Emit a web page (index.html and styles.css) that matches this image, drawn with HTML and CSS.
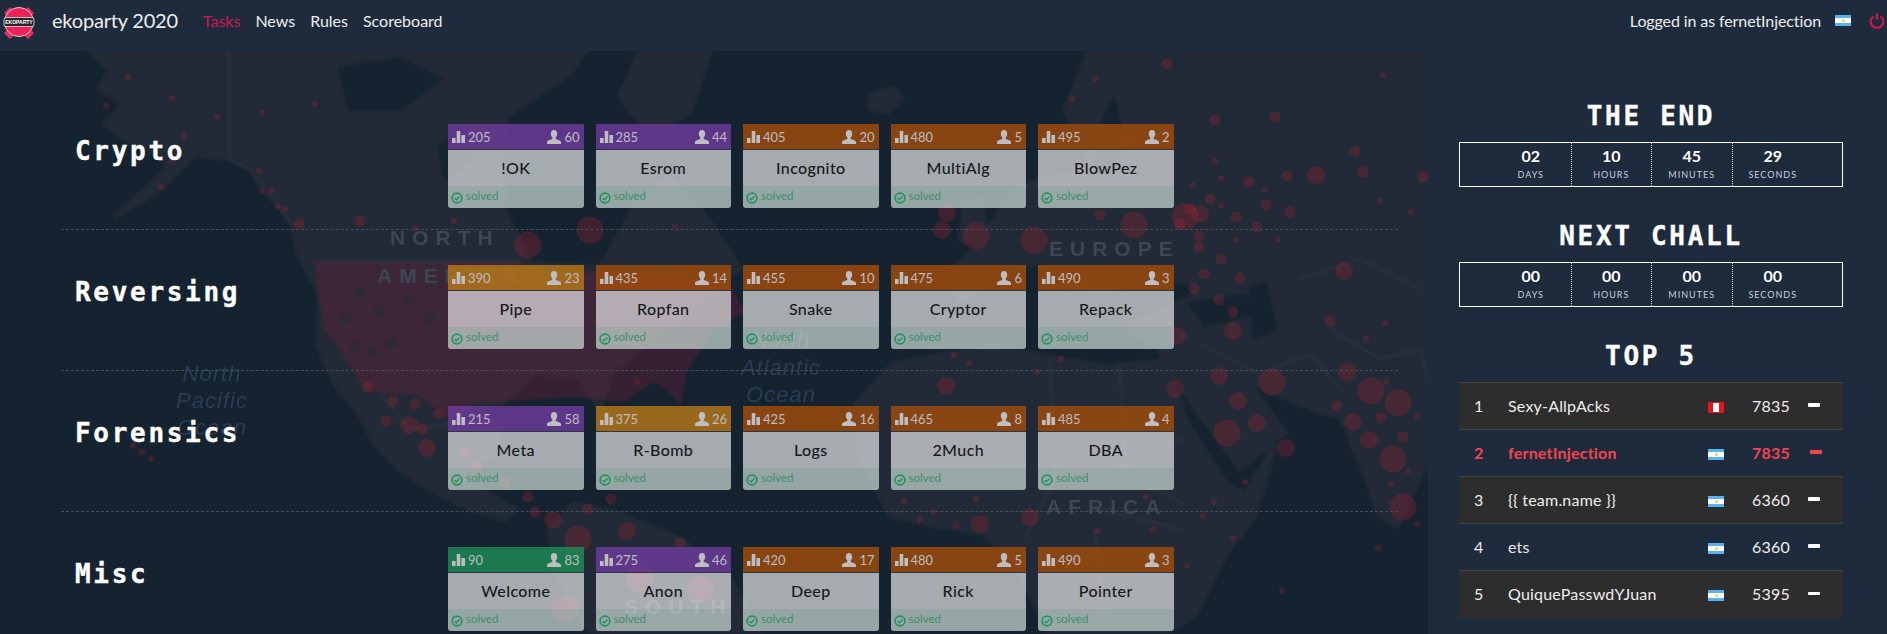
FILE: index.html
```html
<!DOCTYPE html>
<html lang="en">
<head>
  <meta charset="UTF-8">
  <meta name="viewport" content="width=device-width, initial-scale=1.0">
  <title>ekoparty 2020</title>
  <link rel="stylesheet" href="styles.css">
</head>
<body>
  <svg class="sprite" xmlns="http://www.w3.org/2000/svg">
    <symbol id="i-bars" viewBox="0 0 13 12"><path d="M0 7h3.6v5H0zM4.7 0h3.6v12H4.7zM9.4 4H13v8H9.4z"/></symbol>
    <symbol id="i-user" viewBox="0 0 14 14"><path d="M7 0c2 0 3.2 1.6 3.2 3.8 0 1.700-.7 3-1.500 3.800v1.100c0 .6 5.300 1.500 5.300 3.300V14H0v-2c0-1.800 5.300-2.700 5.300-3.300V7.600C4.500 6.800 3.800 5.500 3.800 3.800 3.800 1.600 5 0 7 0z"/></symbol>
    <symbol id="i-check" viewBox="0 0 12 12"><circle cx="6" cy="6" r="4.900" fill="none" stroke="#1f9460" stroke-width="1.600"/><path d="M3.500 6.200l1.800 1.600 3.300-3.300" fill="none" stroke="#1f9460" stroke-width="1.500"/></symbol>
  </svg>

  <nav class="navbar">
    <svg class="logo" viewBox="0 0 34 34">
      <path d="M2 8l6-6 3 3-6 6zM32 8l-6-6-3 3 6 6zM2 28l6 6 3-3-6-6zM32 28l-6 6-3-3 6-6z" fill="#e0315f"/>
      <circle cx="17" cy="17" r="14.500" fill="#ee2257" stroke="#f3c6d2" stroke-width="1"/>
      <rect x="2" y="12.500" width="30" height="9" rx="2" fill="#26262c" stroke="#fff" stroke-width=".7"/>
      <text x="17" y="19.300" class="logo-text">EKOPARTY</text>
    </svg>
    <a class="brand" href="#">ekoparty 2020</a>
    <ul class="nav-links">
      <li><a class="active" href="#">Tasks</a></li>
      <li><a href="#">News</a></li>
      <li><a href="#">Rules</a></li>
      <li><a href="#">Scoreboard</a></li>
    </ul>
    <div class="nav-right">
      <span>Logged in as fernetInjection</span>
      <span class="flag flag-ar"></span>
      <svg class="power" viewBox="0 0 16 16"><path d="M4.500 3.300a6.300 6.300 0 1 0 7 0" fill="none" stroke="#c9174f" stroke-width="2.200"/><path d="M8 .5v6" stroke="#c9174f" stroke-width="2.200"/></svg>
    </div>
  </nav>

  <main class="main">
    <section class="tasks">
      <svg class="map" viewBox="0 52 1428 582" preserveAspectRatio="none">
        <g class="map-shapes">
          <g fill="#212a36" stroke="#212a36" stroke-width="6" stroke-linejoin="round">
            <path d="M90 52l20 18-10 20 25 15-20 20 20 15 25 10 20 15-30 30-25 23 45-28 35-35 35 5 20 10 20 25 15 20 7 10 8 35 20 35-2 50 17 40 25 30 15 30 25 25 30 20 40 20 35 10 10-10-35-20-10-25 25-10 5-30-30-15 31-6 32-31 47 6 20 30 10-35 30-25 30-25 70-55-40-60-30-30-30 20-40 70-70-5-30-60 30-50-20-40 60-40 20-30z"/>
            <path d="M640 52l70 0-20 60-40 25-30-40z"/>
            <path d="M573 505l47 10 60 25 50 40 30 54H590l-35-64-5-40z"/>
            <path d="M942 356l50-8 55 10 60 10 58-6 22 62 38 60 20 12 30-50-20 70-30 40-30 60-30 18h-115l-30-60-35-40-50-8-45-10-30-60-4-50 36-40z"/>
            <path d="M1170 52h258v410l-20 40-10 25-18-10-18-50-22-50-30-8-35-15-30-15 40 55-45 35-45-60-40-65-30-15 65-30 10-12-60-15-30 20-40-5-30-25-50 15-30 25-10-30 30-25 10-20 30-40 60-15 10-20-25-40 25-60 40-30z"/>
            <path d="M965 205l15-5 5 30-10 15-15-5z"/>
            <path d="M870 97l22-8 10 10-15 14-17-4z"/>
          </g>
          <g fill="#15222f" stroke="#15222f" stroke-width="4" stroke-linejoin="round">
            <path d="M510 120l60-10 30 40-25 70-45 15-25-60z"/>
            <path d="M340 70l60-10 40 20-40 30-50 0zM440 150l20-20 10 30-25 20z"/>
            <path d="M1190 305l55-8 5 18-45 10zM1250 290l15-5 10 45-20 8z"/>
            <path d="M1100 130l14-30 8 40-12 35-14-5z"/>
          </g>
          <path fill="#75203a" fill-opacity=".34" d="M321 263h200l40 14 30-4 60 3 80 12 15 25-30 15-30 45-5 35-12-15-15-10-30 20-50-5-45 3-55 4-22 18-32-27-52-3-45-65-8-65z"/>
          <path d="M360 295h0M378 312h0M345 320h0M392 345h0M372 352h0M408 300h0M430 318h0M355 348h0" stroke="#222b37" stroke-width="11" stroke-linecap="round" opacity=".55"/>
          <g fill="none" stroke="#fff" stroke-opacity=".06" stroke-width="1.500">
            <path d="M229 52v108l20 10 18 25 25 30M321 263h200M380 395l30 35 40-5M1050 360l5 120-30 60M1120 365l5 110 60 30M1185 440l-70 30M1200 345l60 30 50-20 35 40M1300 280l60-20 60 30M1330 330l50 30 40-10 8 30M1100 510l80 20M1095 532l10 100"/>
          </g>
        </g>
        <g fill="none" stroke="#b01f33" stroke-opacity=".28" stroke-linecap="round">
          <path stroke-width="6" d="M128 78h0M106 106h0M172 99h0M217 118h0M184 137h0M262 114h0M315 105h0M172 161h0M161 188h0M259 172h0M271 192h0M262 192h0M278 207h0M285 210h0M415 229h0M454 222h0M675 227h0M637 383h0M133 447h0M142 453h0M151 460h0M1095 80h0M1072 100h0M1383 76h0M1215 162h0M1221 179h0M1193 186h0M1265 191h0M1221 207h0M1380 202h0M1411 213h0M1278 240h0M1236 241h0M1385 324h0M1366 339h0M1386 383h0M1417 417h0M1408 472h0M1391 485h0M1417 525h0M1378 549h0M1245 483h0M1214 503h0M1203 517h0M1233 539h0M1187 567h0M1282 592h0M1146 498h0M1153 530h0M1097 532h0M956 527h0M933 513h0M920 521h0M976 500h0M904 502h0M1061 360h0M1037 373h0M969 364h0M954 356h0"/>
          <path stroke-width="11" d="M1167 65h0M1215 121h0M1275 118h0M1355 152h0M1287 177h0M1363 173h0M1423 178h0M1249 183h0M1236 218h0M1266 206h0M1290 213h0M1257 228h0M1199 237h0M1199 248h0M1221 260h0M1204 275h0M1240 279h0M1194 290h0M1219 301h0M1233 313h0M1330 322h0M1337 407h0M1381 419h0M1403 438h0M1124 142h0M1100 216h0M393 402h0M415 405h0M367 388h0M386 422h0M422 430h0M438 415h0M464 453h0M477 468h0M505 483h0M528 498h0M535 513h0M588 510h0M611 500h0M680 544h0M299 225h0M360 222h0M1210 200h0M1190 210h0M1180 225h0"/>
          <path stroke-width="18" d="M1316 176h0M1344 272h0M1233 332h0M1177 337h0M1347 373h0M1219 377h0M1238 402h0M1175 390h0M1353 423h0M1257 424h0M1286 449h0M1369 441h0M1030 518h0M980 525h0M946 387h0M409 426h0M427 449h0M553 521h0M627 532h0M1200 215h0M947 214h0M942 231h0"/>
          <path stroke-width="27" d="M1272 383h0M1371 392h0M1398 404h0M1227 434h0M1393 460h0M1403 508h0M1134 226h0M1034 241h0M976 237h0M1185 218h0M528 246h0M590 231h0M578 540h0M565 610h0M640 580h0M700 590h0"/>
        </g>
        <g class="map-land">
          <text x="390" y="246">NORTH</text>
          <text x="377" y="284">AMERICA</text>
          <text x="1049" y="257">EUROPE</text>
          <text x="1046" y="515">AFRICA</text>
          <text x="624" y="615">SOUTH</text>
        </g>
        <g class="map-sea">
          <text x="212" y="382">North</text>
          <text x="212" y="409">Pacific</text>
          <text x="212" y="436">Ocean</text>
          <text x="781" y="348">North</text>
          <text x="781" y="376">Atlantic</text>
          <text x="781" y="403">Ocean</text>
        </g>
      </svg>

      <div class="category">
        <h3 class="category-name">Crypto</h3>
        <div class="cards">
          <div class="card">
            <div class="card-head level-easy"><svg class="bars"><use href="#i-bars"/></svg><span>205</span><svg class="user"><use href="#i-user"/></svg><span>60</span></div>
            <div class="card-title">!OK</div>
            <div class="card-foot"><svg class="check"><use href="#i-check"/></svg><span>solved</span></div>
          </div>
          <div class="card">
            <div class="card-head level-easy"><svg class="bars"><use href="#i-bars"/></svg><span>285</span><svg class="user"><use href="#i-user"/></svg><span>44</span></div>
            <div class="card-title">Esrom</div>
            <div class="card-foot"><svg class="check"><use href="#i-check"/></svg><span>solved</span></div>
          </div>
          <div class="card">
            <div class="card-head level-hard"><svg class="bars"><use href="#i-bars"/></svg><span>405</span><svg class="user"><use href="#i-user"/></svg><span>20</span></div>
            <div class="card-title">Incognito</div>
            <div class="card-foot"><svg class="check"><use href="#i-check"/></svg><span>solved</span></div>
          </div>
          <div class="card">
            <div class="card-head level-hard"><svg class="bars"><use href="#i-bars"/></svg><span>480</span><svg class="user"><use href="#i-user"/></svg><span>5</span></div>
            <div class="card-title">MultiAlg</div>
            <div class="card-foot"><svg class="check"><use href="#i-check"/></svg><span>solved</span></div>
          </div>
          <div class="card">
            <div class="card-head level-hard"><svg class="bars"><use href="#i-bars"/></svg><span>495</span><svg class="user"><use href="#i-user"/></svg><span>2</span></div>
            <div class="card-title">BlowPez</div>
            <div class="card-foot"><svg class="check"><use href="#i-check"/></svg><span>solved</span></div>
          </div>
        </div>
      </div>

      <div class="category">
        <h3 class="category-name">Reversing</h3>
        <div class="cards">
          <div class="card">
            <div class="card-head level-medium"><svg class="bars"><use href="#i-bars"/></svg><span>390</span><svg class="user"><use href="#i-user"/></svg><span>23</span></div>
            <div class="card-title">Pipe</div>
            <div class="card-foot"><svg class="check"><use href="#i-check"/></svg><span>solved</span></div>
          </div>
          <div class="card">
            <div class="card-head level-hard"><svg class="bars"><use href="#i-bars"/></svg><span>435</span><svg class="user"><use href="#i-user"/></svg><span>14</span></div>
            <div class="card-title">Ropfan</div>
            <div class="card-foot"><svg class="check"><use href="#i-check"/></svg><span>solved</span></div>
          </div>
          <div class="card">
            <div class="card-head level-hard"><svg class="bars"><use href="#i-bars"/></svg><span>455</span><svg class="user"><use href="#i-user"/></svg><span>10</span></div>
            <div class="card-title">Snake</div>
            <div class="card-foot"><svg class="check"><use href="#i-check"/></svg><span>solved</span></div>
          </div>
          <div class="card">
            <div class="card-head level-hard"><svg class="bars"><use href="#i-bars"/></svg><span>475</span><svg class="user"><use href="#i-user"/></svg><span>6</span></div>
            <div class="card-title">Cryptor</div>
            <div class="card-foot"><svg class="check"><use href="#i-check"/></svg><span>solved</span></div>
          </div>
          <div class="card">
            <div class="card-head level-hard"><svg class="bars"><use href="#i-bars"/></svg><span>490</span><svg class="user"><use href="#i-user"/></svg><span>3</span></div>
            <div class="card-title">Repack</div>
            <div class="card-foot"><svg class="check"><use href="#i-check"/></svg><span>solved</span></div>
          </div>
        </div>
      </div>

      <div class="category">
        <h3 class="category-name">Forensics</h3>
        <div class="cards">
          <div class="card">
            <div class="card-head level-easy"><svg class="bars"><use href="#i-bars"/></svg><span>215</span><svg class="user"><use href="#i-user"/></svg><span>58</span></div>
            <div class="card-title">Meta</div>
            <div class="card-foot"><svg class="check"><use href="#i-check"/></svg><span>solved</span></div>
          </div>
          <div class="card">
            <div class="card-head level-medium"><svg class="bars"><use href="#i-bars"/></svg><span>375</span><svg class="user"><use href="#i-user"/></svg><span>26</span></div>
            <div class="card-title">R-Bomb</div>
            <div class="card-foot"><svg class="check"><use href="#i-check"/></svg><span>solved</span></div>
          </div>
          <div class="card">
            <div class="card-head level-hard"><svg class="bars"><use href="#i-bars"/></svg><span>425</span><svg class="user"><use href="#i-user"/></svg><span>16</span></div>
            <div class="card-title">Logs</div>
            <div class="card-foot"><svg class="check"><use href="#i-check"/></svg><span>solved</span></div>
          </div>
          <div class="card">
            <div class="card-head level-hard"><svg class="bars"><use href="#i-bars"/></svg><span>465</span><svg class="user"><use href="#i-user"/></svg><span>8</span></div>
            <div class="card-title">2Much</div>
            <div class="card-foot"><svg class="check"><use href="#i-check"/></svg><span>solved</span></div>
          </div>
          <div class="card">
            <div class="card-head level-hard"><svg class="bars"><use href="#i-bars"/></svg><span>485</span><svg class="user"><use href="#i-user"/></svg><span>4</span></div>
            <div class="card-title">DBA</div>
            <div class="card-foot"><svg class="check"><use href="#i-check"/></svg><span>solved</span></div>
          </div>
        </div>
      </div>

      <div class="category">
        <h3 class="category-name">Misc</h3>
        <div class="cards">
          <div class="card">
            <div class="card-head level-intro"><svg class="bars"><use href="#i-bars"/></svg><span>90</span><svg class="user"><use href="#i-user"/></svg><span>83</span></div>
            <div class="card-title">Welcome</div>
            <div class="card-foot"><svg class="check"><use href="#i-check"/></svg><span>solved</span></div>
          </div>
          <div class="card">
            <div class="card-head level-easy"><svg class="bars"><use href="#i-bars"/></svg><span>275</span><svg class="user"><use href="#i-user"/></svg><span>46</span></div>
            <div class="card-title">Anon</div>
            <div class="card-foot"><svg class="check"><use href="#i-check"/></svg><span>solved</span></div>
          </div>
          <div class="card">
            <div class="card-head level-hard"><svg class="bars"><use href="#i-bars"/></svg><span>420</span><svg class="user"><use href="#i-user"/></svg><span>17</span></div>
            <div class="card-title">Deep</div>
            <div class="card-foot"><svg class="check"><use href="#i-check"/></svg><span>solved</span></div>
          </div>
          <div class="card">
            <div class="card-head level-hard"><svg class="bars"><use href="#i-bars"/></svg><span>480</span><svg class="user"><use href="#i-user"/></svg><span>5</span></div>
            <div class="card-title">Rick</div>
            <div class="card-foot"><svg class="check"><use href="#i-check"/></svg><span>solved</span></div>
          </div>
          <div class="card">
            <div class="card-head level-hard"><svg class="bars"><use href="#i-bars"/></svg><span>490</span><svg class="user"><use href="#i-user"/></svg><span>3</span></div>
            <div class="card-title">Pointer</div>
            <div class="card-foot"><svg class="check"><use href="#i-check"/></svg><span>solved</span></div>
          </div>
        </div>
      </div>
    </section>

    <aside class="sidebar">
      <h2 class="side-title">THE END</h2>
      <div class="countdown">
        <div class="count-cell"><b>02</b><small>Days</small></div>
        <div class="count-cell"><b>10</b><small>Hours</small></div>
        <div class="count-cell"><b>45</b><small>Minutes</small></div>
        <div class="count-cell"><b>29</b><small>Seconds</small></div>
      </div>

      <h2 class="side-title">NEXT CHALL</h2>
      <div class="countdown">
        <div class="count-cell"><b>00</b><small>Days</small></div>
        <div class="count-cell"><b>00</b><small>Hours</small></div>
        <div class="count-cell"><b>00</b><small>Minutes</small></div>
        <div class="count-cell"><b>00</b><small>Seconds</small></div>
      </div>

      <h2 class="side-title">TOP 5</h2>
      <table class="top-table">
        <colgroup><col class="col-pos"><col class="col-name"><col class="col-flag"><col class="col-score"><col class="col-move"></colgroup>
        <tr><td>1</td><td>Sexy-AllpAcks</td><td><span class="flag flag-pe"></span></td><td class="score">7835</td><td><span class="minus"></span></td></tr>
        <tr class="me"><td>2</td><td>fernetInjection</td><td><span class="flag flag-ar"></span></td><td class="score">7835</td><td><span class="minus"></span></td></tr>
        <tr><td>3</td><td>{{ team.name }}</td><td><span class="flag flag-ar"></span></td><td class="score">6360</td><td><span class="minus"></span></td></tr>
        <tr><td>4</td><td>ets</td><td><span class="flag flag-ar"></span></td><td class="score">6360</td><td><span class="minus"></span></td></tr>
        <tr><td>5</td><td>QuiquePasswdYJuan</td><td><span class="flag flag-ar"></span></td><td class="score">5395</td><td><span class="minus"></span></td></tr>
      </table>
    </aside>
  </main>
</body>
</html>
```

FILE: styles.css
```css
html, body {
  height: 100%;
  overflow: hidden;
}

body {
  margin: 0;
  background: #1e2b3d;
  color: #eee;
  font-family: 'Lato', sans-serif;
  font-size: 16px;
}

a {
  color: inherit;
  text-decoration: none;
}

.sprite {
  display: none;
}

/* navbar */
.navbar {
  height: 51px;
  display: flex;
  align-items: center;
  padding: 0 2px 0 2px;
  box-sizing: border-box;
}

.logo {
  width: 34px;
  height: 34px;
  margin-top: -8px;
}

.logo-text {
  font-family: 'Liberation Sans', sans-serif;
  font-size: 5px;
  font-weight: bold;
  fill: #fff;
  text-anchor: middle;
}

.brand {
  margin: -12px 0 0 16px;
  font-size: 20px;
  letter-spacing: -.2px;
}

.nav-links {
  display: flex;
  gap: 15px;
  list-style: none;
  margin: -10px 0 0 25px;
  padding: 0;
}

.nav-links .active {
  color: #d0184f;
}

.nav-right {
  margin-left: auto;
  display: flex;
  align-items: center;
  gap: 14px;
  margin-top: -10px;
  letter-spacing: -.1px;
}

.power {
  width: 16px;
  height: 16px;
  margin-left: 4px;
}

.flag {
  display: inline-block;
  position: relative;
  width: 16px;
  height: 11px;
  vertical-align: middle;
}

.flag-ar {
  background: linear-gradient(#55b4ee 30%, #fff 30% 70%, #55b4ee 70%);
}

.flag-ar::after {
  content: '';
  position: absolute;
  left: 6.500px;
  top: 4px;
  width: 3px;
  height: 3px;
  border-radius: 50%;
  background: #f2d24a;
}

.flag-pe {
  background: linear-gradient(90deg, #e8141c 30%, #fff 30% 70%, #e8141c 70%);
  box-shadow: inset 0 0 0 1px #e8141c;
}

/* tasks */
.main {
  display: flex;
  height: calc(100% - 51px);
}

.tasks {
  position: relative;
  width: 1428px;
  flex-shrink: 0;
  box-sizing: border-box;
  padding: 38px 30px 0 61px;
  background: #15222f;
  overflow: hidden;
}

.map {
  position: absolute;
  left: 0;
  top: 0;
  width: 1428px;
  height: 582px;
  filter: blur(.6px);
}

.map-shapes {
  filter: blur(1.5px);
}

.map-land {
  font-family: 'Liberation Sans', sans-serif;
  font-size: 21px;
  font-weight: bold;
  letter-spacing: 7px;
  fill: #3c4654;
}

.map-sea {
  font-family: 'Liberation Sans', sans-serif;
  font-size: 22px;
  font-style: italic;
  letter-spacing: 1px;
  fill: #2a3d55;
  text-anchor: middle;
}

.category {
  position: relative;
  display: flex;
  height: 141px;
  box-sizing: border-box;
  padding-top: 35px;
  border-bottom: 1px dashed #46505c;
}

.category:last-child {
  border-bottom: 0;
}

.category-name,
.side-title {
  font-family: 'DejaVu Sans Mono', monospace;
  font-weight: bold;
  font-size: 26px;
  letter-spacing: 2.700px;
  line-height: 32px;
  color: #fff;
  margin: 0;
  -webkit-text-stroke: .4px #fff;
}

.category-name {
  width: 387px;
  box-sizing: border-box;
  flex-shrink: 0;
  padding: 11px 0 0 14px;
}

.cards {
  display: flex;
  gap: 12px;
}

.card {
  width: 135.500px;
  height: 84px;
  display: flex;
  flex-direction: column;
  border-radius: 0 0 3px 3px;
  overflow: hidden;
}

.card-head {
  height: 25px;
  flex-shrink: 0;
  display: flex;
  align-items: center;
  padding: 0 4px;
  font-size: 13px;
  color: #bdbdc2;
  border-bottom: 1px solid #2f3640;
}

.card-head svg {
  fill: #bdbdc2;
}

.card-head .bars {
  width: 13px;
  height: 12px;
  margin-right: 3px;
}

.card-head .user {
  width: 14px;
  height: 14px;
  margin: 0 3px 0 auto;
}

.level-intro {
  background: rgba(30, 142, 86, .8);
}

.level-easy {
  background: rgba(112, 60, 160, .8);
}

.level-medium {
  background: rgba(186, 122, 24, .8);
}

.level-hard {
  background: rgba(165, 78, 10, .8);
}

.card-title {
  flex: 1;
  display: flex;
  align-items: center;
  justify-content: center;
  padding-bottom: 2px;
  box-sizing: border-box;
  background: rgba(255, 255, 255, .62);
  color: #17181c;
  font-size: 16px;
  font-weight: 500;
  letter-spacing: .4px;
}

.card-foot {
  height: 22px;
  display: flex;
  align-items: center;
  padding-left: 3px;
  gap: 3px;
  background: linear-gradient(rgba(40, 130, 95, .13), rgba(40, 130, 95, .13)), rgba(255, 255, 255, .62);
  color: #3d8f6c;
  font-size: 11.500px;
}

.card-foot span {
  margin-top: -3px;
}

.check {
  width: 12px;
  height: 12px;
  margin-top: 2px;
}

/* sidebar */
.sidebar {
  width: 384px;
  margin-left: 31px;
  padding-top: 49px;
}

.side-title {
  text-align: center;
  margin: 0 0 10px;
}

.countdown {
  height: 45px;
  box-sizing: border-box;
  border: 1px solid #fff;
  display: flex;
  justify-content: center;
  padding-left: 2px;
  margin-bottom: 33px;
}

.count-cell {
  width: 80.500px;
  box-sizing: border-box;
  display: flex;
  flex-direction: column;
  align-items: center;
  padding-top: 3px;
  border-right: 1px dotted #ddd;
}

.count-cell:last-child {
  border-right: 0;
}

.count-cell b {
  font-size: 16px;
  line-height: 20px;
  color: #fff;
}

.count-cell small {
  font-size: 9px;
  line-height: 17px;
  letter-spacing: 1px;
  text-transform: uppercase;
  color: #ccd;
}

.top-table {
  width: 384px;
  table-layout: fixed;
  border-collapse: collapse;
  letter-spacing: .2px;
}

.top-table td {
  height: 47px;
  padding: 0 0 2px;
  box-sizing: border-box;
  border-top: 1px solid #444;
}

.top-table tr:nth-child(odd) {
  background: #2d2d2d;
}

.top-table td:first-child {
  padding-left: 15px;
}

.col-pos {
  width: 49px;
}

.col-name {
  width: 200px;
}

.col-flag {
  width: 40px;
}

.col-score {
  width: 42px;
}

.col-move {
  width: 53px;
}

.score {
  text-align: right;
}

.minus {
  display: block;
  width: 12px;
  height: 3.500px;
  margin-left: 18px;
  border-radius: 1px;
  background: #fff;
}

.me {
  color: #f4434f;
  font-weight: bold;
}

.me .minus {
  background: #f4434f;
  margin-left: 20px;
}
```
